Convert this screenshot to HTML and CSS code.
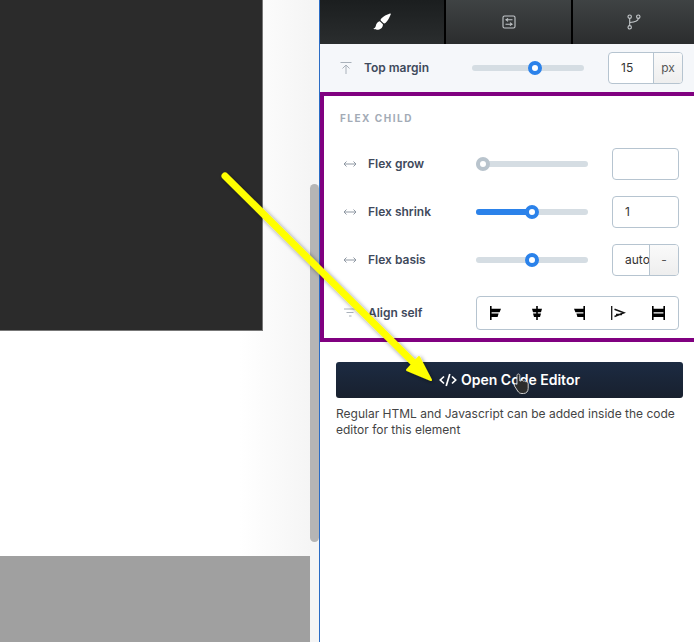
FILE: index.html
```html
<!DOCTYPE html>
<html lang="en">
<head>
  <meta charset="UTF-8" />
  <title>Flex child settings</title>
  <link rel="stylesheet" href="styles.css">
</head>
<body>
  <!-- Canvas -->
  <main class="canvas">
    <div class="canvas-area">
      <div class="dark-block"></div>
      <div class="grey-block"></div>
    </div>
    <div class="scrollbar"><div class="scroll-thumb"></div></div>
  </main>

  <!-- Sidebar -->
  <aside class="sidebar">
    <nav class="tabs">
      <div class="tab tab-active">
        <svg width="18" height="18" viewBox="0 0 18 18"><path fill="#fff" d="M17 .6c.6-.3 1 .2.8.7-1.200 3-3 6.600-5.100 8.500-.8.700-1.500.8-2.100.5L7.700 7.500c-.3-.7-.1-1.400.6-2C10.300 3.500 13.800 1.700 17 .6zM6.800 8.200l3.100 3.100c.2 2.800-1.800 5.100-4.700 5.400-1.700.2-3.500 0-5-1.100 1.500-.3 2.200-1 2.500-2.300.5-2.900 2.200-4.900 4.100-5.100z"/></svg>
      </div>
      <div class="tab tab-middle">
        <svg width="14" height="14" viewBox="0 0 14 14" fill="none" stroke="#c4c8cb" stroke-width="1.100"><rect x="1" y="1" width="12" height="12" rx="1.500"/><path d="M3.500 4.800h7M3.500 9.200h7"/><path d="M6 3.300 4.300 4.800 6 6.300M8 7.700l1.700 1.500L8 10.700"/></svg>
      </div>
      <div class="tab tab-last">
        <svg width="14" height="16" viewBox="0 0 14 16" fill="none" stroke="#c4c8cb" stroke-width="1.100"><circle cx="2.700" cy="2.700" r="1.700"/><circle cx="2.700" cy="13.300" r="1.700"/><circle cx="11.300" cy="2.700" r="1.700"/><path d="M2.700 4.400v7.200M11.300 4.400c0 2.600-3.600 3.600-8.600 4.100"/></svg>
      </div>
    </nav>

    <div class="row row-margin">
      <svg class="row-icon" width="14" height="14" viewBox="0 0 14 14" fill="none" stroke="#a9b1ba" stroke-width="1"><path d="M1.500 1.500h11M7 13V4M3.500 7.500 7 4l3.500 3.500"/></svg>
      <span class="row-label">Top margin</span>
      <div class="slider slider-margin">
        <div class="thumb" style="left: 56%"></div>
      </div>
      <div class="field field-margin">
        <span class="field-value">15</span>
        <span class="field-unit">px</span>
      </div>
    </div>

    <section class="flex-child">
      <h2 class="heading">Flex child</h2>

      <div class="row">
        <svg class="row-icon" width="14" height="8" viewBox="0 0 14 8" fill="none" stroke="#8f98a3" stroke-width="1"><path d="M1 4h12M3.500 1.500 1 4l2.500 2.500M10.500 1.500 13 4l-2.500 2.500"/></svg>
        <span class="row-label">Flex grow</span>
        <div class="slider">
          <div class="thumb thumb-off" style="left: 7px"></div>
        </div>
        <div class="field"><span class="field-value"></span></div>
      </div>

      <div class="row">
        <svg class="row-icon" width="14" height="8" viewBox="0 0 14 8" fill="none" stroke="#8f98a3" stroke-width="1"><path d="M1 4h12M3.500 1.500 1 4l2.500 2.500M10.500 1.500 13 4l-2.500 2.500"/></svg>
        <span class="row-label">Flex shrink</span>
        <div class="slider">
          <div class="slider-fill" style="width: 50%"></div>
          <div class="thumb" style="left: 50%"></div>
        </div>
        <div class="field"><span class="field-value">1</span></div>
      </div>

      <div class="row">
        <svg class="row-icon" width="14" height="8" viewBox="0 0 14 8" fill="none" stroke="#8f98a3" stroke-width="1"><path d="M1 4h12M3.500 1.500 1 4l2.500 2.500M10.500 1.500 13 4l-2.500 2.500"/></svg>
        <span class="row-label">Flex basis</span>
        <div class="slider">
          <div class="thumb" style="left: 50%"></div>
        </div>
        <div class="field">
          <span class="field-value field-clip">auto</span>
          <span class="field-unit">-</span>
        </div>
      </div>

      <div class="row row-align">
        <svg class="row-icon" width="14" height="10" viewBox="0 0 14 10" fill="none" stroke="#a9b1ba" stroke-width="1"><path d="M1 1h12M3.500 4.500h7M6 8h2.500"/></svg>
        <span class="row-label">Align self</span>
        <div class="align-group">
          <svg width="16" height="14" viewBox="0 0 16 14"><path d="M0 0h1.600v14H0zM1.600 2.800H11L9.600 6.200h-8zM1.600 7.600h7L7.600 11h-6z"/></svg>
          <svg width="16" height="14" viewBox="0 0 16 14"><path d="M4.200 0h1.600v14H4.200zM0 2.800h10L9 6.200H1zM1 7.600h8L8 11H2z"/></svg>
          <svg width="11" height="14" viewBox="0 0 11 14"><path d="M9.400 0H11v14H9.400zM9.400 2.800H0l1.400 3.400h8zM9.400 7.600h-7l1 3.400h6z"/></svg>
          <svg width="15" height="14" viewBox="0 0 15 14" fill="none" stroke="#111"><path d="M.7 0v14" stroke-width="1.300"/><path d="M3.500 3.300 13 6.800l-9.500 3.700M5 8.500h6" stroke-width="1.500"/></svg>
          <svg width="13" height="14" viewBox="0 0 13 14"><path d="M0 0h1.600v14H0zM11.400 0H13v14h-1.600zM1.600 2.800h9.800v3.400H1.600zM1.600 7.600h9.800V11H1.600z"/></svg>
        </div>
      </div>
    </section>

    <div class="code-block">
      <button class="code-btn">
        <svg width="18" height="14" viewBox="0 0 18 14" fill="none" stroke="#fff" stroke-width="1.700"><path d="M5 3.500 1.300 7 5 10.500M13 3.500 16.700 7 13 10.500M10.800 1 7.200 13"/></svg>
        <span class="code-btn-text">Open Code Editor</span>
      </button>
      <p class="code-help">Regular HTML and Javascript can be added inside the code editor for this element</p>
    </div>
  </aside>

  <!-- Annotation on top of the screenshot -->
  <svg class="arrow" width="694" height="642" viewBox="0 0 694 642">
    <defs>
      <filter id="arrowShadow" x="-10%" y="-10%" width="120%" height="120%">
        <feDropShadow dx="1" dy="1" stdDeviation="2" flood-color="#000" flood-opacity=".45"/>
      </filter>
    </defs>
    <g filter="url(#arrowShadow)">
      <path d="M225 176 415 364" stroke="#ff0" stroke-width="7" stroke-linecap="round" fill="none"/>
      <path d="M431 380 407 370 419 357z" fill="#ff0" stroke="#ff0" stroke-width="2" stroke-linejoin="round"/>
    </g>
  </svg>
  <svg class="cursor" width="20" height="22" viewBox="0 0 20 22">
    <path d="M5 2.500c0-2 2.800-2 2.800 0V8h1c1-.8 2-.6 2.500.2 1-.5 2-.2 2.400.6 1.200-.3 2.500.4 2.500 2v4.500c0 3-1.800 5.200-4.700 5.200H10c-2 0-3.200-.8-4.300-2.500L2.500 13c-1-1.600.8-3 2.500-1.700z" fill="#2c2c2c" stroke="#ccc" stroke-width="1"/>
  </svg>
</body>
</html>
```

FILE: styles.css
```css
* {
  box-sizing: border-box;
}
body {
  font-family: Inter, "Noto Sans", sans-serif;
  background: #fff;
  margin: 0;
  width: 694px;
  height: 642px;
  overflow: hidden;
  display: flex;
}

/* Canvas */
.canvas {
  width: 319px;
  display: flex;
  background: linear-gradient(to right, #fff 240px, #f5f5f5 310px);
}
.canvas-area {
  width: 310px;
  display: flex;
  flex-direction: column;
  justify-content: space-between;
}
.dark-block {
  width: 263px;
  height: 331px;
  background: #2b2b2b;
  border-right: 1px solid #777;
  border-bottom: 1px solid #777;
}
.grey-block {
  height: 86px;
  background: #a0a0a0;
}
.scrollbar {
  width: 9px;
  padding-top: 184px;
}
.scroll-thumb {
  height: 358px;
  background: #b5b5b5;
  border-radius: 5px;
}

/* Sidebar */
.sidebar {
  width: 375px;
  border-left: 1px solid #2b6cc4;
}
.tabs {
  display: flex;
  height: 44px;
  background: #000;
  gap: 2px;
}
.tab {
  width: 124px;
  display: flex;
  align-items: center;
  justify-content: center;
  background: linear-gradient(#3f4344, #2b2d2e);
}
.tab-active {
  background: linear-gradient(#1b1e1f, #2a2d2e);
}
.tab-middle {
  width: 125px;
}
.tab-last {
  width: 121px;
}
.row {
  display: flex;
  align-items: center;
  height: 32px;
  margin-bottom: 16px;
}
.row-margin {
  height: 48px;
  margin: 0;
  padding: 0 11px 0 19px;
  background: #f5f7fa;
}
.row-icon {
  width: 14px;
  flex-shrink: 0;
  margin-right: 11px;
}
.row-label {
  width: 108px;
  flex-shrink: 0;
  padding-bottom: 1px;
  font-size: 12px;
  font-weight: 600;
  color: #3f4a5c;
}
.slider {
  position: relative;
  width: 112px;
  height: 6px;
  flex-shrink: 0;
  background: #d5dde3;
  border-radius: 3px;
}
.slider-fill {
  height: 100%;
  background: #2b82ea;
  border-radius: 3px;
}
.thumb {
  position: absolute;
  top: 50%;
  width: 14px;
  height: 14px;
  margin: -7px 0 0 -7px;
  background: #fff;
  border: 4px solid #2b82ea;
  border-radius: 50%;
}
.thumb-off {
  border-color: #b9c4cd;
}
.field {
  display: flex;
  width: 67px;
  height: 32px;
  margin-left: 24px;
  background: #fff;
  border: 1px solid #b6c4d0;
  border-radius: 4px;
  overflow: hidden;
  font-size: 12px;
  color: #333;
}
.field-margin {
  width: 75px;
}
.field-value {
  flex: 1;
  min-width: 0;
  padding: 0 12px;
  line-height: 30px;
}
.field-clip {
  overflow: hidden;
  padding-right: 0;
}
.field-unit {
  width: 29px;
  flex-shrink: 0;
  line-height: 30px;
  text-align: center;
  color: #555;
  background: linear-gradient(#fafafa, #eeeeee);
  border-left: 1px solid #b6c4d0;
}

/* Flex child */
.flex-child {
  height: 250px;
  padding: 16px 0 0 16px;
  border: 4px solid #800080;
  border-right: 0;
}
.heading {
  margin: 0 0 24px;
  font-size: 10px;
  line-height: 12px;
  font-weight: 700;
  letter-spacing: 1.500px;
  text-transform: uppercase;
  color: #a3abb6;
}
.flex-child .row-icon {
  margin-left: 3px;
}
.row-align {
  height: 34px;
  margin-top: 20px;
  margin-bottom: 0;
}
.align-group {
  display: flex;
  align-items: center;
  gap: 26px;
  width: 203px;
  height: 34px;
  padding: 0 0 0 13px;
  border: 1px solid #b6c4d0;
  border-radius: 4px;
}

/* Code editor */
.code-block {
  padding: 20px 11px 0 16px;
}
.code-btn {
  display: flex;
  align-items: center;
  justify-content: center;
  gap: 4px;
  width: 100%;
  height: 36px;
  padding: 0 0 1px;
  border: none;
  border-radius: 3px;
  background: linear-gradient(#1c2b42, #18202e);
  color: #fff;
  font-family: inherit;
  font-size: 14px;
  font-weight: 600;
}
.code-help {
  margin: 8px 0 0;
  font-size: 12px;
  line-height: 16px;
  color: #444;
}

/* Overlays */
.arrow {
  position: absolute;
  top: 0;
  left: 0;
}
.cursor {
  position: absolute;
  left: 512px;
  top: 373px;
}
```
